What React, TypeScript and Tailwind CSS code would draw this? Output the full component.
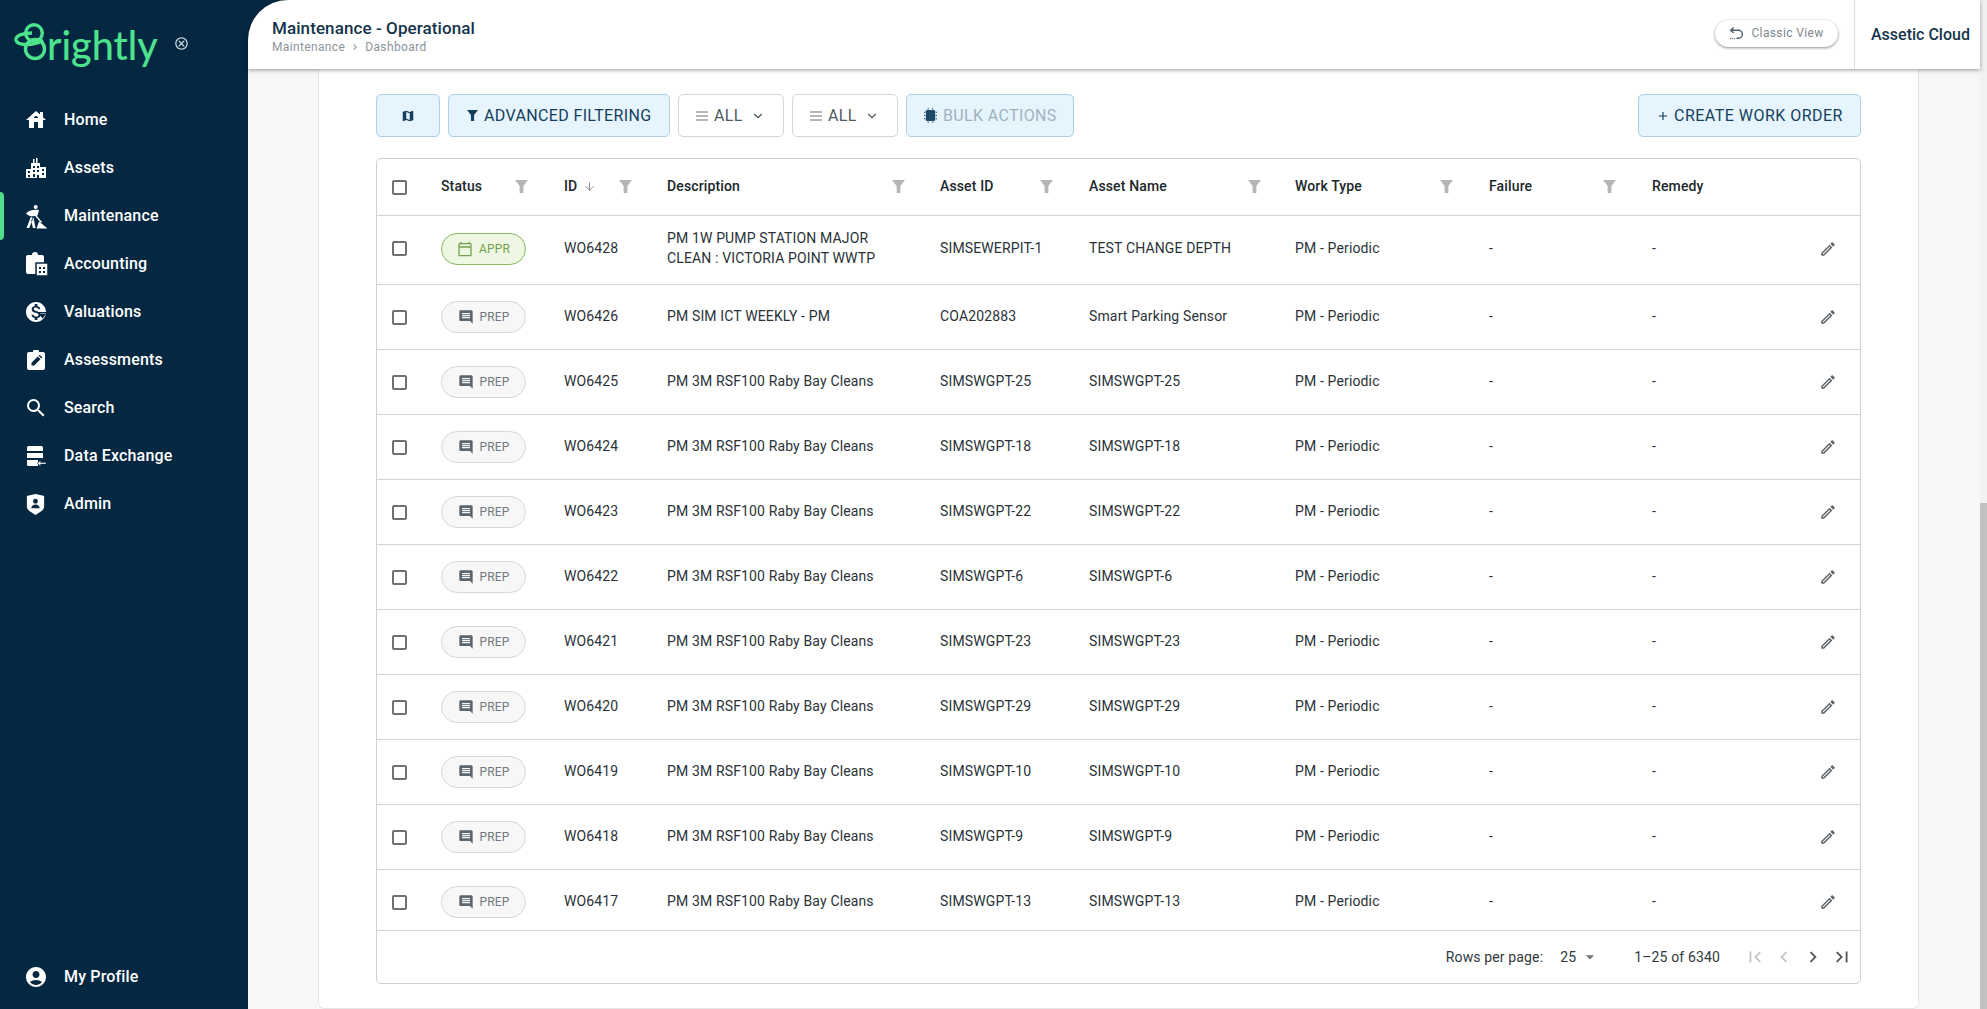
import type { ReactNode } from 'react'
import { ArrowDown, ChevronDown } from 'lucide-react'
import { RiShieldUserFill } from 'react-icons/ri'
import {
  MdAccountCircle, MdAdd, MdArrowDropDown, MdChevronLeft, MdChevronRight, MdFirstPage, MdHouse, MdInsertComment,
  MdLastPage, MdMap, MdMonetizationOn, MdOutlineCalendarToday, MdOutlineCancel, MdOutlineEdit, MdSearch,
} from 'react-icons/md'

const NAVY = '#052842'

function Funnel({ className }: { className: string }) {
  return (
    <svg viewBox="0 0 14 14" className={className} fill="currentColor">
      <path d="M0 0h14L9 6.5V14H5V6.5z" />
    </svg>
  )
}

function AssetsIcon() {
  return (
    <svg viewBox="0 0 20 20" className="w-5 h-5" fill="#fff">
      <path fillRule="evenodd" d="M0 20V11h5V5h2V1h1.5v4H10V0h1.5v5H14v4h6v11zM2 13v2h2v-2zm0 4v2h2v-2zm5-9v2h2V8zm4 0v2h2V8zm-4 4v2h2v-2zm4 0v2h2v-2zm5-1v2h2v-2zm0 4v2h2v-2zm-5 2v3h2v-3zM7 16v3h2v-3z" />
    </svg>
  )
}

function MaintenanceIcon() {
  return (
    <svg viewBox="5 54 23 25" className="w-[23px] h-[25px] -ml-px" fill="#fff">
      <circle cx="15.700" cy="57" r="2" />
      <path d="M6 63.500C9 60 14 59.500 19 60l-1.500 5.500C13 67 9 66.500 6 63.500z" />
      <path d="M11 66.500 6.500 78h2.700l3.800-9zM13.500 67.500l2 10.500h-2.600l-1.700-8z" />
      <path d="M14 63.500 21.500 72.500" stroke="#fff" strokeWidth="1.300" />
      <path d="M19 71.500 27.500 78.500H16.500z" />
    </svg>
  )
}

function AccountingIcon() {
  return (
    <svg viewBox="0 0 22 24" className="w-[22px] h-6">
      <path fill="#fff" d="M2 3h4a3 3 0 0 1 6 0h4a2 2 0 0 1 2 2v15a2 2 0 0 1-2 2H2a2 2 0 0 1-2-2V5a2 2 0 0 1 2-2z" />
      <rect x="10" y="11" width="12" height="13" fill="#fff" stroke={NAVY} strokeWidth="1.5" />
      <path fill={NAVY} d="M13 15h2v2h-2zm4 0h2v2h-2zm-4 4h2v2h-2zm4 0h2v2h-2z" />
    </svg>
  )
}

function ValuationsIcon() {
  return (
    <span className="relative block w-5 h-5">
      <MdMonetizationOn className="w-[24px] h-[24px] -m-0.5 text-white" />
      <svg viewBox="0 0 20 20" className="absolute inset-0 w-5 h-5">
        <path fill={NAVY} d="M12 10h8v1.5h-8zM13 12h7l-3.5 4.5z" />
      </svg>
    </span>
  )
}

function AssessmentsIcon() {
  return (
    <svg viewBox="0 0 20 20" className="w-5 h-5">
      <path fill="#fff" d="M3 2h4a3 3 0 0 1 6 0h4a2 2 0 0 1 2 2v14a2 2 0 0 1-2 2H3a2 2 0 0 1-2-2V4a2 2 0 0 1 2-2z" />
      <path fill={NAVY} d="M5.500 15.500v-2.700l6.300-6.300 2.700 2.700-6.300 6.300zM12.600 5.700l1-1 2.700 2.700-1 1z" />
    </svg>
  )
}

function DataExchangeIcon() {
  return (
    <svg viewBox="0 0 20 20" className="w-5 h-5" fill="#fff">
      <path d="M1 1.500A1.500 1.500 0 0 1 2.500 0h13A1.500 1.500 0 0 1 17 1.500V5H1zM1 7h16v5H1zM1 14h11v2.500l-1 .5 1 .5V20H2.500A1.500 1.500 0 0 1 1 18.500z" />
      <path d="M20 16.500h-5.500V14.500l-3 2.800 3 2.700v-2H20z" stroke={NAVY} strokeWidth="0.4" />
    </svg>
  )
}

function ChipIcon() {
  return (
    <svg viewBox="0 0 14 16" className="w-[13px] h-[15px] mr-[6px] shrink-0" fill="#1d4a68">
      <rect x="2" y="2" width="10" height="12" rx="1.500" />
      <path d="M0 4h1.500v1H0zm0 3.500h1.500v1H0zM0 11h1.500v1H0zM12.500 4H14v1h-1.500zm0 3.500H14v1h-1.500zm0 3.500H14v1h-1.500zM4 0h1v1.500H4zm5 0h1v1.500H9zM4 14.500h1V16H4zm5 0h1V16H9z" />
    </svg>
  )
}

function NavItem({ icon, label, active }: { icon: ReactNode; label: string; active?: boolean }) {
  return (
    <div className="flex items-center h-12 relative">
      {active && <span className="absolute left-0 inset-y-0 w-1 rounded-r-sm bg-[#4ee08a]" />}
      <span className="w-[64px] pl-[26px] flex items-center shrink-0">{icon}</span>
      <span className="text-white text-base font-medium tracking-[0.01em]">{label}</span>
    </div>
  )
}

function Logo() {
  return (
    <div className="h-[72px] pl-[14px] pt-[20px] flex items-start">
      {/* the B mark, drawn in page coordinates */}
      <svg viewBox="14 23 36 42" className="w-[36px] h-[42px] shrink-0 -mr-[3px] mt-[3px]" fill="none" stroke="#4de38d" strokeWidth="3.400">
        <circle cx="34" cy="33" r="8.300" />
        <circle cx="35" cy="49" r="9.500" />
        <path d="M43 40C34 46 17 46 16 40 15.500 35 24 33 32 33" />
      </svg>
      <span className="font-['Lato',sans-serif] font-medium text-[39.500px] leading-[48px] text-[#4de38d] mt-[1px]">rightly</span>
      <MdOutlineCancel className="w-[15px] h-[15px] text-[#cfd8de] ml-[16px] mt-[16px]" />
    </div>
  )
}

function Sidebar() {
  return (
    <aside className="w-[248px] shrink-0 bg-[#052842] flex flex-col">
      <Logo />
      <nav className="mt-[24px] flex flex-col">
        <NavItem label="Home" icon={<MdHouse className="w-[24px] h-[24px] -ml-0.5 text-white" />} />
        <NavItem label="Assets" icon={<AssetsIcon />} />
        <NavItem label="Maintenance" active icon={<MaintenanceIcon />} />
        <NavItem label="Accounting" icon={<AccountingIcon />} />
        <NavItem label="Valuations" icon={<ValuationsIcon />} />
        <NavItem label="Assessments" icon={<AssessmentsIcon />} />
        <NavItem label="Search" icon={<MdSearch className="w-6 h-6 -ml-0.5 text-white" />} />
        <NavItem label="Data Exchange" icon={<DataExchangeIcon />} />
        <NavItem label="Admin" icon={<RiShieldUserFill className="w-[23px] h-[23px] -ml-0.5 text-white" />} />
      </nav>
      <div className="mt-auto mb-[8px]">
        <NavItem label="My Profile" icon={<MdAccountCircle className="w-6 h-6 -ml-0.5 text-white" />} />
      </div>
    </aside>
  )
}

function Header() {
  return (
    <header className="relative z-10 h-[69px] shrink-0 bg-white rounded-tl-[40px] shadow-[0_1px_4px_rgba(0,0,0,0.4)] flex items-center pl-[24px]">
      <div className="flex-1 mt-[3px]">
        <h1 className="text-[17px] leading-[22px] font-medium text-[#14344c] tracking-[0.005em]">Maintenance - Operational</h1>
        <p className="text-xs leading-[16px] text-[#8b959c] tracking-[0.03em] flex items-center">
          Maintenance <MdChevronRight className="mx-[4px] w-3 h-3" /> Dashboard
        </p>
      </div>
      <button className="h-[27px] w-[123px] -mt-[3px] rounded-full bg-white shadow-[0_1px_3px_rgba(0,0,0,0.45)] text-xs text-[#7c8890] tracking-[0.03em] flex items-center justify-center gap-[7px] mr-[16px]">
        <svg viewBox="0 0 16 16" className="w-[15px] h-[15px]" fill="none" stroke="#4e6070" strokeWidth="1.500">
          <path d="M5 1.500 1.800 4.500 5 7.500M2 4.500h8a4 4 0 0 1 0 8.500H8" />
          <path d="M1 13.500h5" strokeDasharray="1 1" />
        </svg>
        Classic View
      </button>
      <div className="h-full border-l border-[#dedede] w-[126px] pl-[16px] flex items-center text-base font-medium text-[#14344c]">Assetic Cloud</div>
    </header>
  )
}

function ToolButton({ children, plain, className }: { children: ReactNode; plain?: boolean; className: string }) {
  return (
    <button className={`h-[43px] rounded-[5px] border flex items-center text-base tracking-[0.0225em] ${plain ? 'bg-white border-[#d6d6d6] text-[#4f5b63]' : 'bg-[#e6f4fd] border-[#aed0e6] text-[#14405e]'} ${className}`}>
      {children}
    </button>
  )
}

function MenuLines() {
  return (
    <svg viewBox="0 0 12 10" className="w-3 h-[10px] mr-[6px]" stroke="#6b6f73" strokeWidth="1.200">
      <path d="M0 1h12M0 5h12M0 9h12" />
    </svg>
  )
}

function Toolbar() {
  return (
    <div className="flex gap-2 items-center">
      <ToolButton className="w-[64px] justify-center"><MdMap className="w-[14px] h-[14px]" /></ToolButton>
      <ToolButton className="w-[222px] pl-[18px]"><Funnel className="w-[11px] h-[11px] mr-[6px]" />ADVANCED FILTERING</ToolButton>
      <ToolButton plain className="w-[106px] pl-[17px]"><MenuLines />ALL<ChevronDown className="w-[14px] h-[14px] ml-[8px]" /></ToolButton>
      <ToolButton plain className="w-[106px] pl-[17px]"><MenuLines />ALL<ChevronDown className="w-[14px] h-[14px] ml-[8px]" /></ToolButton>
      <ToolButton className="w-[168px] pl-[17px] !text-[#9fb3c0]"><ChipIcon />BULK ACTIONS</ToolButton>
      <ToolButton className="ml-auto w-[223px] pl-[17px] !tracking-[0.03em]"><MdAdd className="w-[14px] h-[14px] mr-[4px]" />CREATE WORK ORDER</ToolButton>
    </div>
  )
}

const gridCols = 'grid grid-cols-[64px_123px_103px_273px_149px_206px_194px_163px_100px_1fr] items-center'

function Checkbox() {
  return (
    <span className="flex justify-center w-[44px]">
      <span className="block w-[15px] h-[15px] border-2 border-[#707070] rounded-[2px] bg-white" />
    </span>
  )
}

function Status({ code }: { code: 'APPR' | 'PREP' }) {
  const appr = code === 'APPR'
  return (
    <span className={`h-8 w-[85px] rounded-full border flex items-center justify-center gap-[6px] text-xs ${appr ? 'bg-[#eef7e1] border-[#8cb866] text-[#76a050]' : 'bg-[#f7f7f7] border-[#d8d8d8] text-[#6f7a82]'}`}>
      {appr ? <MdOutlineCalendarToday className="w-[16px] h-[16px]" /> : <MdInsertComment className="w-[16px] h-[16px] text-[#5b666e]" />}
      {code}
    </span>
  )
}

function HeadCell({ label, filterAt, sorted }: { label: string; filterAt?: number; sorted?: boolean }) {
  return (
    <div className="relative flex items-center pb-[2px] text-sm font-medium text-[#20272c] tracking-[0.01em]">
      {label}
      {sorted && <ArrowDown className="w-[13px] h-[13px] ml-[6px] text-[#777]" strokeWidth={1.5} />}
      {filterAt !== undefined && <span className="absolute top-[4px]" style={{ left: filterAt }}><Funnel className="w-[13px] h-[13px] text-[#b3b5b6]" /></span>}
    </div>
  )
}

type Row = { id: string; desc: string[]; assetId: string; name: string; status: 'APPR' | 'PREP' }

const rows: Row[] = [
  { id: 'WO6428', desc: ['PM 1W PUMP STATION MAJOR', 'CLEAN : VICTORIA POINT WWTP'], assetId: 'SIMSEWERPIT-1', name: 'TEST CHANGE DEPTH', status: 'APPR' },
  { id: 'WO6426', desc: ['PM SIM ICT WEEKLY - PM'], assetId: 'COA202883', name: 'Smart Parking Sensor', status: 'PREP' },
  ...[['WO6425', '25'], ['WO6424', '18'], ['WO6423', '22'], ['WO6422', '6'], ['WO6421', '23'], ['WO6420', '29'], ['WO6419', '10'], ['WO6418', '9'], ['WO6417', '13']].map(
    ([id, n]): Row => ({ id, desc: ['PM 3M RSF100 Raby Bay Cleans'], assetId: `SIMSWGPT-${n}`, name: `SIMSWGPT-${n}`, status: 'PREP' }),
  ),
]

function TableRow({ row, first }: { row: Row; first: boolean }) {
  return (
    <div className={`${gridCols} shrink-0 border-b border-[#d3d3d3] text-sm text-[#2a3238] tracking-[0.01em] ${first ? 'h-[69px] pb-[3px]' : 'h-[65px]'}`}>
      <Checkbox />
      <Status code={row.status} />
      <div className="pb-[2px]">{row.id}</div>
      <div className="pb-[2px] leading-[20px]">{row.desc.map((d) => <div key={d}>{d}</div>)}</div>
      <div className="pb-[2px]">{row.assetId}</div>
      <div className="pb-[2px]">{row.name}</div>
      <div className="pb-[2px]">PM - Periodic</div>
      <div className="pb-[2px]">-</div>
      <div className="pb-[2px]">-</div>
      <div className="flex justify-end pr-[23px]"><MdOutlineEdit className="w-[18px] h-[18px] text-[#5f6468]" /></div>
    </div>
  )
}

function Pagination() {
  const box = 'w-[29px] flex justify-center'
  return (
    <div className="h-[52px] shrink-0 flex items-center justify-end pr-[4px] text-sm text-[#30383e] tracking-[0.01em]">
      <span>Rows per page:</span>
      <span className="ml-[17px]">25</span>
      <MdArrowDropDown className="w-5 h-5 ml-[4px] text-[#777]" />
      <span className="ml-[34px]">1–25 of 6340</span>
      <div className="ml-[20px] flex items-center">
        <span className={box}><MdFirstPage className="w-[22px] h-[22px] text-[#c4c4c4]" /></span>
        <span className={box}><MdChevronLeft className="w-[22px] h-[22px] text-[#c4c4c4]" /></span>
        <span className={box}><MdChevronRight className="w-[22px] h-[22px] text-[#555]" /></span>
        <span className={box}><MdLastPage className="w-[22px] h-[22px] text-[#555]" /></span>
      </div>
    </div>
  )
}

function WorkOrderTable() {
  return (
    <div className="mt-[21px] h-[826px] border border-[#d0d0d0] rounded-[5px] flex flex-col overflow-hidden">
      <div className={`${gridCols} h-[57px] shrink-0 border-b border-[#d3d3d3]`}>
        <Checkbox />
        <HeadCell label="Status" filterAt={74} />
        <HeadCell label="ID" sorted filterAt={55} />
        <HeadCell label="Description" filterAt={225} />
        <HeadCell label="Asset ID" filterAt={100} />
        <HeadCell label="Asset Name" filterAt={159} />
        <HeadCell label="Work Type" filterAt={145} />
        <HeadCell label="Failure" filterAt={114} />
        <HeadCell label="Remedy" />
        <div />
      </div>
      <div className="flex-1 min-h-0 overflow-hidden flex flex-col border-b border-[#d3d3d3]">
        {rows.map((r, i) => <TableRow key={r.id} row={r} first={i === 0} />)}
      </div>
      <Pagination />
    </div>
  )
}

export default function App() {
  return (
    <div className="flex h-screen w-full overflow-hidden font-['Roboto',sans-serif]">
      <Sidebar />
      <main className="flex-1 min-w-0 flex flex-col bg-[#052842]">
        <Header />
        <div className="flex-1 min-h-0 bg-[#f7f7f7] pl-[70px] pr-[61px]">
          <div className="h-full bg-white border-x border-b border-[#e6e6e6] rounded-b-md pt-[25px] px-[57px]">
            <Toolbar />
            <WorkOrderTable />
          </div>
        </div>
      </main>
      <div className="w-[7px] shrink-0 bg-[#f1f1f1] pt-[503px]">
        <div className="h-full bg-[#c1c1c1]" />
      </div>
    </div>
  )
}
